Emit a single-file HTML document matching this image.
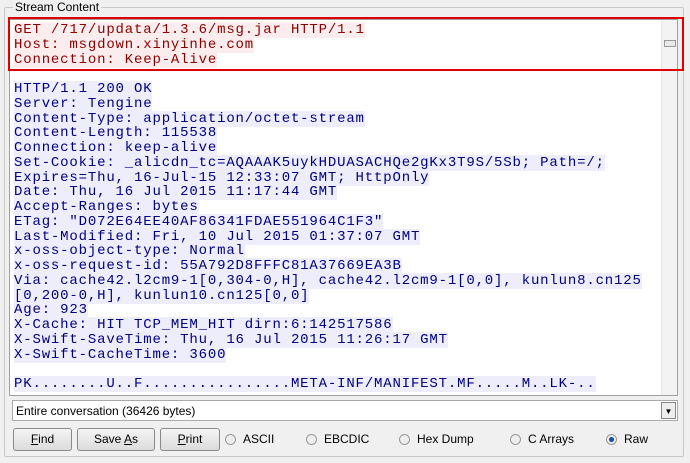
<!DOCTYPE html>
<html><head><meta charset="utf-8"><style>
*{margin:0;padding:0;box-sizing:border-box}
body{width:690px;height:463px;background:#f0f0f0;position:relative;overflow:hidden;font-family:"Liberation Sans",sans-serif}
.grp{position:absolute;left:4px;top:7px;width:680px;height:450px;border:1px solid #c9c9c9;border-radius:2px}
.lgd{position:absolute;left:8px;top:0px;background:#f0f0f0;font-size:12px;padding:0 2px;color:#000}
.ta{position:absolute;left:9px;top:19px;width:669px;height:377px;background:#fff;border:1px solid #a0a0a0;overflow:hidden}
pre{position:absolute;left:4px;top:3px;font-family:"Liberation Mono",monospace;font-size:14px;letter-spacing:0.83px;line-height:14.75px;white-space:pre}
.r{color:#8b0000;background:#fbeded}
.b{color:#00007f;background:#ededfb}
.sb{position:absolute;right:0;top:0;width:16px;height:100%;background:#f3f3f3;border-left:1px solid #e6e6e6}
.red{position:absolute;left:8px;top:17px;width:676px;height:54px;border:2.5px solid #e00000}
.dd{position:absolute;left:12px;top:400px;width:666px;height:21px;background:#fff;border:1px solid #aaa;font-size:12px;padding:3px 0 0 3px}
.dd i{position:absolute;right:1px;top:1px;width:15px;height:17px;border:1px solid #888;background:#eee;font-style:normal;font-size:8px;text-align:center;line-height:17px}
.btn{position:absolute;top:428px;height:23px;border:1px solid #8a8a8a;border-radius:3px;background:linear-gradient(#f4f4f4,#dcdcdc);font-size:12px;text-align:center;line-height:21px}
.rd{position:absolute;top:433px;font-size:12px;line-height:13px}
.rd b{display:inline-block;width:11px;height:11px;border-radius:50%;border:1px solid #999;background:#eee;vertical-align:-2px;margin-right:7px}
.rd b.on{background:radial-gradient(#1c4f9c 35%,#eee 45%)}
</style></head><body>
<div class="grp"><span class="lgd" style="top:-8px">Stream Content</span></div>
<div class="ta">
<pre><span class="r">GET /717/updata/1.3.6/msg.jar HTTP/1.1</span>
<span class="r">Host: msgdown.xinyinhe.com</span>
<span class="r">Connection: Keep-Alive</span>

<span class="b">HTTP/1.1 200 OK</span>
<span class="b">Server: Tengine</span>
<span class="b">Content-Type: application/octet-stream</span>
<span class="b">Content-Length: 115538</span>
<span class="b">Connection: keep-alive</span>
<span class="b">Set-Cookie: _alicdn_tc=AQAAAK5uykHDUASACHQe2gKx3T9S/5Sb; Path=/;</span>
<span class="b">Expires=Thu, 16-Jul-15 12:33:07 GMT; HttpOnly</span>
<span class="b">Date: Thu, 16 Jul 2015 11:17:44 GMT</span>
<span class="b">Accept-Ranges: bytes</span>
<span class="b">ETag: "D072E64EE40AF86341FDAE551964C1F3"</span>
<span class="b">Last-Modified: Fri, 10 Jul 2015 01:37:07 GMT</span>
<span class="b">x-oss-object-type: Normal</span>
<span class="b">x-oss-request-id: 55A792D8FFFC81A37669EA3B</span>
<span class="b">Via: cache42.l2cm9-1[0,304-0,H], cache42.l2cm9-1[0,0], kunlun8.cn125</span>
<span class="b">[0,200-0,H], kunlun10.cn125[0,0]</span>
<span class="b">Age: 923</span>
<span class="b">X-Cache: HIT TCP_MEM_HIT dirn:6:142517586</span>
<span class="b">X-Swift-SaveTime: Thu, 16 Jul 2015 11:26:17 GMT</span>
<span class="b">X-Swift-CacheTime: 3600</span>

<span class="b">PK........U..F................META-INF/MANIFEST.MF.....M..LK-..</span></pre>
<div class="sb"><div style="position:absolute;left:2px;top:20px;width:12px;height:7px;border:1px solid #999;background:#e8e8e8"></div></div>
</div>
<div class="red"></div>
<div class="dd">Entire conversation (36426 bytes)<i>▼</i></div>
<div class="btn" style="left:13px;width:59px"><u>F</u>ind</div>
<div class="btn" style="left:77px;width:78px">Save <u>A</u>s</div>
<div class="btn" style="left:160px;width:60px"><u>P</u>rint</div>
<div class="rd" style="left:225px"><b></b>ASCII</div>
<div class="rd" style="left:306px"><b></b>EBCDIC</div>
<div class="rd" style="left:399px"><b></b>Hex Dump</div>
<div class="rd" style="left:510px"><b></b>C Arrays</div>
<div class="rd" style="left:606px"><b class="on"></b>Raw</div>
</body></html>
